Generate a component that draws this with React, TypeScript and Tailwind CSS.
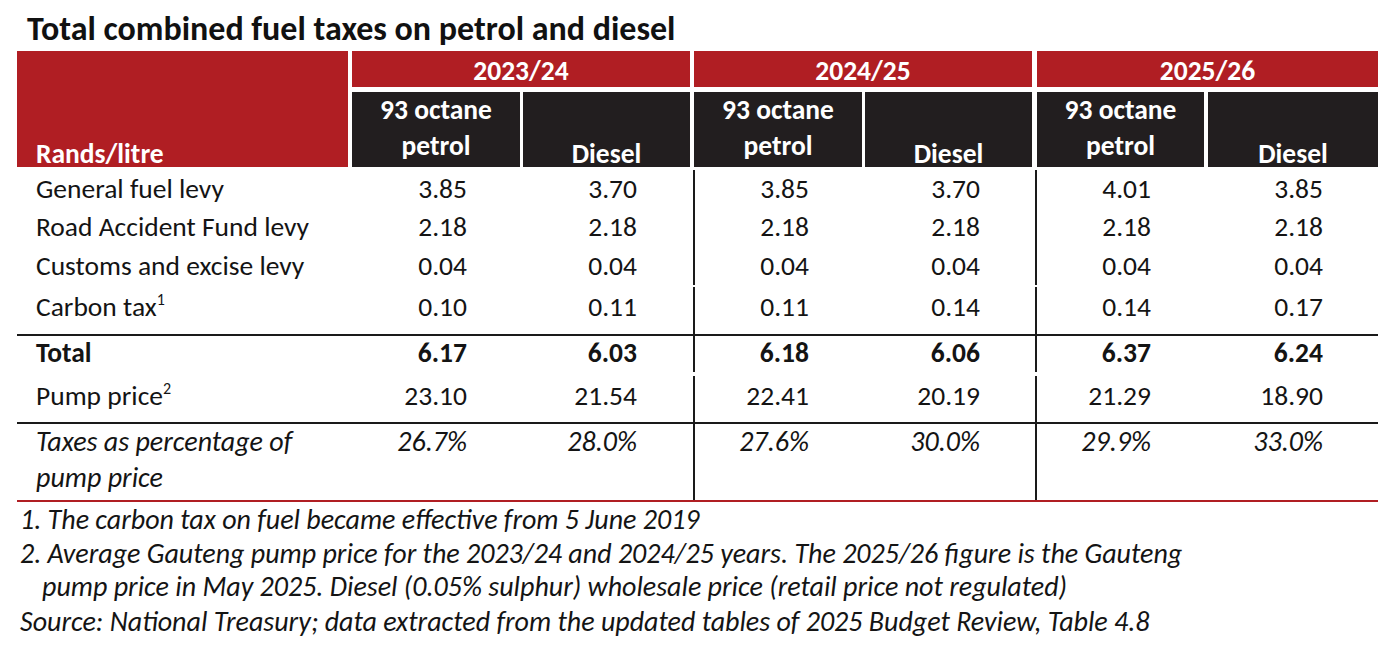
import React from "react";

const RED = "bg-[#b01e23]";

function Cells({ vals, kind }: { vals: string[]; kind?: "bold" | "italic" }) {
  const cls = kind === "bold" ? "font-bold" : kind === "italic" ? "italic text-[28px]" : "";
  return (
    <>
      <div className={`w-[168px] shrink-0 text-right pr-[53px] ${cls}`}>{vals[0]}</div>
      <div className={`w-[173px] shrink-0 text-right pr-[56px] ${cls}`}>{vals[1]}</div>
      <div className="w-[2px] shrink-0 bg-[#1a1a1a]" />
      <div className={`w-[167px] shrink-0 text-right pr-[53px] ${cls}`}>{vals[2]}</div>
      <div className={`w-[173px] shrink-0 text-right pr-[55px] ${cls}`}>{vals[3]}</div>
      <div className="w-[2px] shrink-0 bg-[#1a1a1a]" />
      <div className={`w-[167px] shrink-0 text-right pr-[53px] ${cls}`}>{vals[4]}</div>
      <div className={`w-[174px] shrink-0 text-right pr-[55px] ${cls}`}>{vals[5]}</div>
    </>
  );
}

function YearHead({ year, w, pw, dw, gap }: { year: string; w: string; pw: string; dw: string; gap: string }) {
  return (
    <div className={`${w} shrink-0 flex flex-col gap-[5px]`}>
      <div className={`${RED} h-[36px] pt-[3px] leading-[34px] text-center text-white font-bold`}>{year}</div>
      <div className={`flex ${gap} h-[75px]`}>
        <div className={`${pw} shrink-0 bg-[#221e1f] text-white font-bold text-center leading-[36px]`}>
          93 octane
          <br />
          petrol
        </div>
        <div className={`${dw} shrink-0 bg-[#221e1f] text-white font-bold flex items-end justify-center leading-none`}>
          Diesel
        </div>
      </div>
    </div>
  );
}

export default function App() {
  return (
    <div
      className="w-[1400px] h-[649px] bg-white text-[#141414] pt-[12px] pl-[17px] overflow-hidden text-[27.5px]"
      style={{ fontFamily: "Carlito, Lato, 'Liberation Sans', sans-serif" }}
    >
      <div className="pl-[10px] text-[34px] font-bold leading-[34px] mb-[5px] text-[#111]">
        Total combined fuel taxes on petrol and diesel
      </div>

      {/* header */}
      <div className="flex h-[116px]">
        <div className={`w-[331px] shrink-0 ${RED} flex items-end pl-[19px] text-white font-bold leading-none`}>
          Rands/litre
        </div>
        <div className="w-[4px] shrink-0" />
        <YearHead year="2023/24" w="w-[338px]" pw="w-[168px]" dw="w-[167px]" gap="gap-[3px]" />
        <div className="w-[4px] shrink-0" />
        <YearHead year="2024/25" w="w-[338px]" pw="w-[168px]" dw="w-[167px]" gap="gap-[3px]" />
        <div className="w-[5px] shrink-0" />
        <YearHead year="2025/26" w="w-[341px]" pw="w-[167px]" dw="w-[170px]" gap="gap-[4px]" />
      </div>

      {/* body */}
      <div className="w-[1361px]">
        <div className="flex h-[40px] pt-[3px] leading-[37px]">
          <div className="w-[335px] shrink-0 pl-[19px]">General fuel levy</div>
          <Cells vals={["3.85", "3.70", "3.85", "3.70", "4.01", "3.85"]} />
        </div>
        <div className="flex h-[39px] leading-[39px]">
          <div className="w-[335px] shrink-0 pl-[19px]">Road Accident Fund levy</div>
          <Cells vals={["2.18", "2.18", "2.18", "2.18", "2.18", "2.18"]} />
        </div>
        <div className="flex h-[39px] leading-[39px]">
          <div className="w-[335px] shrink-0 pl-[19px]">Customs and excise levy</div>
          <Cells vals={["0.04", "0.04", "0.04", "0.04", "0.04", "0.04"]} />
        </div>
        <div className="flex h-[49px] pt-[2px] leading-[39px]">
          <div className="w-[335px] shrink-0 pl-[19px]">
            Carbon tax<sup className="text-[16px] -top-[11px]">1</sup>
          </div>
          <Cells vals={["0.10", "0.11", "0.11", "0.14", "0.14", "0.17"]} />
        </div>
        <div className="h-[2px] bg-[#1a1a1a]" />
        <div className="flex h-[36px] leading-[34px]">
          <div className="w-[335px] shrink-0 pl-[19px] font-bold">Total</div>
          <Cells kind="bold" vals={["6.17", "6.03", "6.18", "6.06", "6.37", "6.24"]} />
        </div>
        <div className="flex h-[50px] pt-[4px] leading-[40px]">
          <div className="w-[335px] shrink-0 pl-[19px]">
            Pump price<sup className="text-[16px] -top-[11px]">2</sup>
          </div>
          <Cells vals={["23.10", "21.54", "22.41", "20.19", "21.29", "18.90"]} />
        </div>
        <div className="h-[2px] bg-[#1a1a1a]" />
        <div className="flex h-[76px] leading-[36px]">
          <div className="w-[335px] shrink-0 pl-[19px] italic text-[28px]">
            Taxes as percentage of
            <br />
            pump price
          </div>
          <Cells kind="italic" vals={["26.7%", "28.0%", "27.6%", "30.0%", "29.9%", "33.0%"]} />
        </div>
        <div className="h-[2px] bg-[#b01e23]" />
      </div>

      {/* footnotes */}
      <div className="pl-[3px] pt-[1px] italic text-[28px] leading-[33px] text-[#141414]">
        <div>1. The carbon tax on fuel became effective from 5 June 2019</div>
        <div className="mt-[1px]">
          2. Average Gauteng pump price for the 2023/24 and 2024/25 years. The 2025/26 figure is the Gauteng
        </div>
        <div className="pl-[22px]">
          pump price in May 2025. Diesel (0.05% sulphur) wholesale price (retail price not regulated)
        </div>
        <div className="mt-[2px]">
          Source: National Treasury; data extracted from the updated tables of 2025 Budget Review, Table 4.8
        </div>
      </div>
    </div>
  );
}
